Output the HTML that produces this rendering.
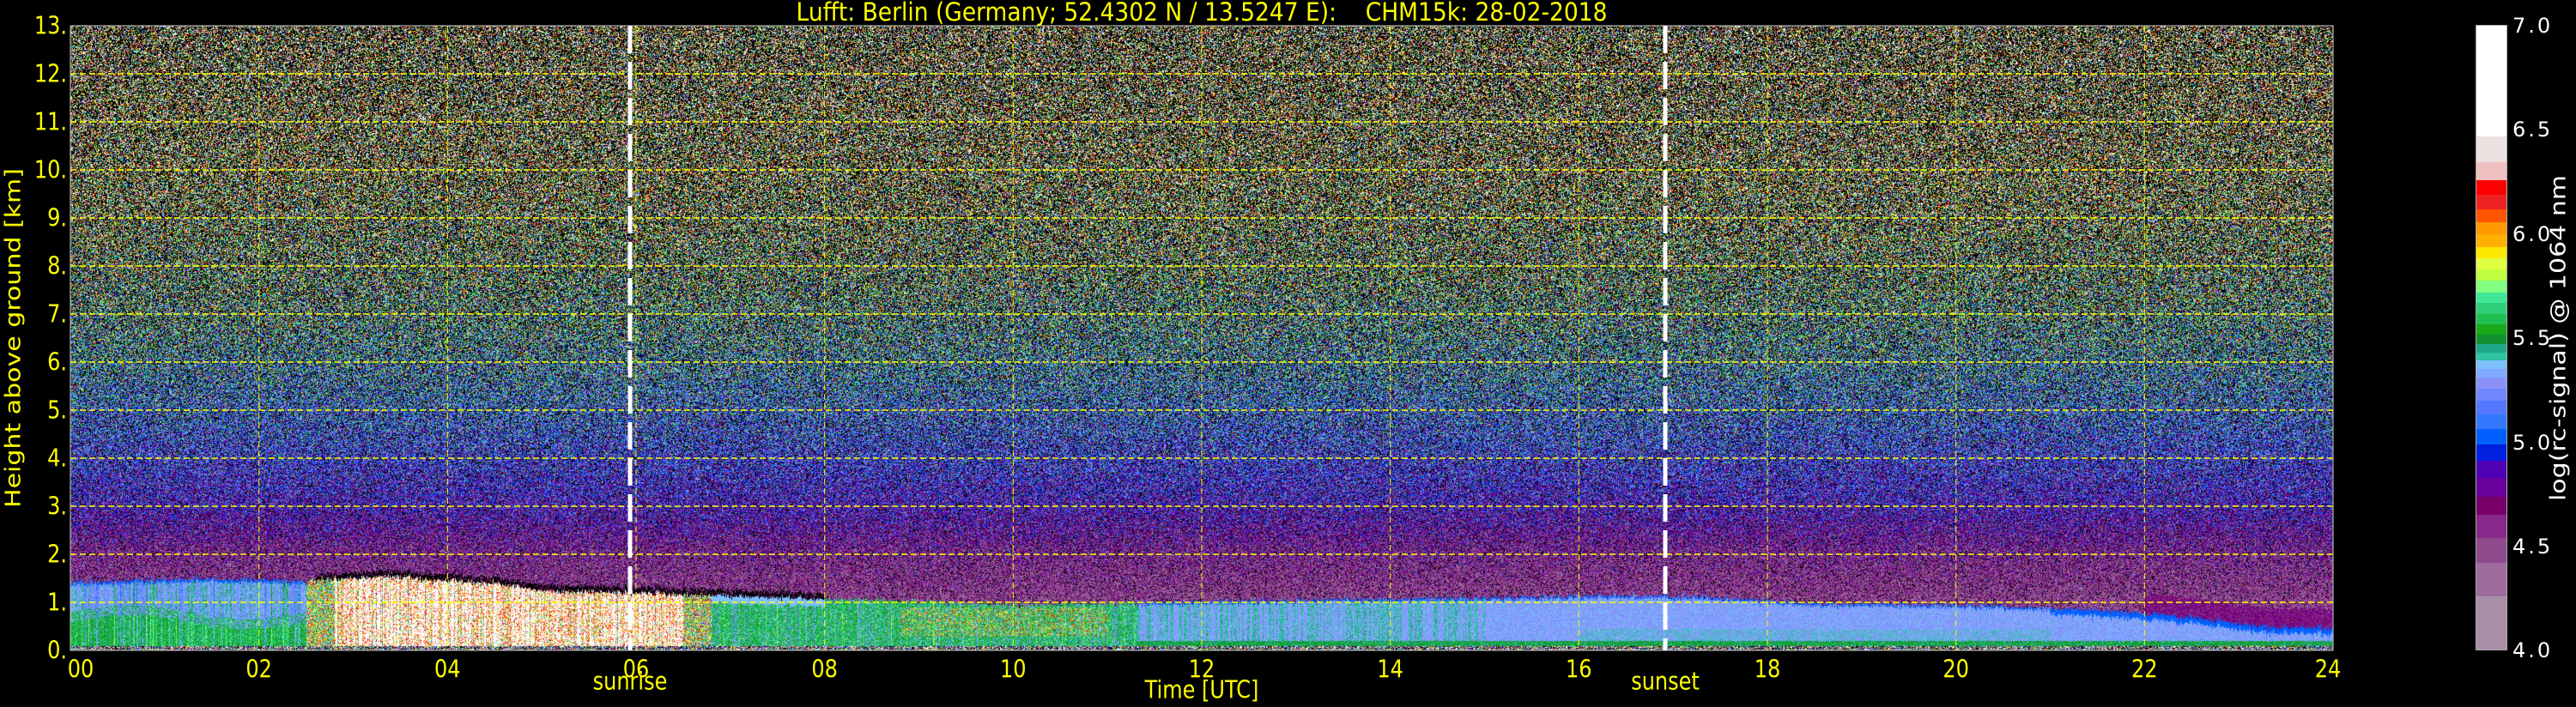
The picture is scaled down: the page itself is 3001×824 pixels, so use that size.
<!DOCTYPE html>
<html><head><meta charset="utf-8">
<style>
html,body{margin:0;padding:0;background:#000;width:3001px;height:824px;overflow:hidden;}
body{position:relative;font-family:"DejaVu Sans","Liberation Sans",sans-serif;}
.t{position:absolute;color:#ffff00;font-size:24px;white-space:pre;line-height:1;}
.yl{right:2923px;text-align:right;transform:scaleY(1.2);transform-origin:right center;}
.xl{transform:translate(-50%,0) scaleY(1.2);}
.cb{position:absolute;left:2927px;color:#fff;font-size:24px;letter-spacing:3px;line-height:1;transform:translateY(-50%);}
#plot{position:absolute;left:82px;top:30px;width:2636px;height:728px;
background:linear-gradient(to bottom,#4a3c30 0%,#3c4438 35%,#2c4a52 55%,#2c3a78 70%,#402c70 80%,#5a2e66 86%,#7b88e0 88%,#60c090 96%,#604040 100%);}
</style></head><body>
<div id="plot"><canvas id="cv" width="2636" height="728" style="display:block"></canvas></div>
<svg width="3001" height="824" style="position:absolute;left:0;top:0">
<g stroke="#ffff00" stroke-width="1.5" stroke-dasharray="7,4" fill="none">
<line x1="82" x2="2718" y1="702" y2="702"/><line x1="82" x2="2718" y1="646" y2="646"/>
<line x1="82" x2="2718" y1="590" y2="590"/><line x1="82" x2="2718" y1="534" y2="534"/>
<line x1="82" x2="2718" y1="478" y2="478"/><line x1="82" x2="2718" y1="422" y2="422"/>
<line x1="82" x2="2718" y1="366" y2="366"/><line x1="82" x2="2718" y1="310" y2="310"/>
<line x1="82" x2="2718" y1="254" y2="254"/><line x1="82" x2="2718" y1="198" y2="198"/>
<line x1="82" x2="2718" y1="142" y2="142"/><line x1="82" x2="2718" y1="86" y2="86"/>
</g>
<g stroke="#ffff00" stroke-width="1" stroke-dasharray="7,4" fill="none">
<line y1="30" y2="758" x1="301.7" x2="301.7"/><line y1="30" y2="758" x1="521.3" x2="521.3"/>
<line y1="30" y2="758" x1="741" x2="741"/><line y1="30" y2="758" x1="960.7" x2="960.7"/>
<line y1="30" y2="758" x1="1180.3" x2="1180.3"/><line y1="30" y2="758" x1="1400" x2="1400"/>
<line y1="30" y2="758" x1="1619.7" x2="1619.7"/><line y1="30" y2="758" x1="1839.3" x2="1839.3"/>
<line y1="30" y2="758" x1="2059" x2="2059"/><line y1="30" y2="758" x1="2278.7" x2="2278.7"/>
<line y1="30" y2="758" x1="2498.3" x2="2498.3"/>
</g>
<rect x="82" y="30" width="2636" height="728" fill="none" stroke="#ccc" stroke-width="1"/>
<g stroke="#fff" stroke-width="5" stroke-dasharray="32,10">
<line x1="734" x2="734" y1="30" y2="758"/><line x1="1940" x2="1940" y1="30" y2="758"/>
</g>
</svg>
<div class="t" style="left:1400px;top:2px;transform:translateX(-50%) scaleY(1.1);font-size:26.5px">Lufft: Berlin (Germany; 52.4302 N / 13.5247 E):    CHM15k: 28-02-2018</div>
<div class="t yl" style="top:18px">13.</div>
<div class="t yl" style="top:74px">12.</div>
<div class="t yl" style="top:130px">11.</div>
<div class="t yl" style="top:186px">10.</div>
<div class="t yl" style="top:242px">9.</div>
<div class="t yl" style="top:298px">8.</div>
<div class="t yl" style="top:354px">7.</div>
<div class="t yl" style="top:410px">6.</div>
<div class="t yl" style="top:466px">5.</div>
<div class="t yl" style="top:522px">4.</div>
<div class="t yl" style="top:578px">3.</div>
<div class="t yl" style="top:634px">2.</div>
<div class="t yl" style="top:690px">1.</div>
<div class="t yl" style="top:746px">0.</div>
<div class="t" style="left:15px;top:394px;transform:translate(-50%,-50%) rotate(-90deg) scaleX(1.2);font-size:25px">Height above ground [km]</div>
<div class="t xl" style="left:94px;top:768px">00</div>
<div class="t xl" style="left:301.7px;top:768px">02</div>
<div class="t xl" style="left:521.3px;top:768px">04</div>
<div class="t xl" style="left:741px;top:768px">06</div>
<div class="t xl" style="left:960.7px;top:768px">08</div>
<div class="t xl" style="left:1180.3px;top:768px">10</div>
<div class="t xl" style="left:1400px;top:768px">12</div>
<div class="t xl" style="left:1619.7px;top:768px">14</div>
<div class="t xl" style="left:1839.3px;top:768px">16</div>
<div class="t xl" style="left:2059px;top:768px">18</div>
<div class="t xl" style="left:2278.7px;top:768px">20</div>
<div class="t xl" style="left:2498.3px;top:768px">22</div>
<div class="t xl" style="left:2712px;top:768px">24</div>
<div class="t xl" style="left:734px;top:782px">sunrise</div>
<div class="t xl" style="left:1940px;top:782px">sunset</div>
<div class="t xl" style="left:1400px;top:792px">Time [UTC]</div>
<div id="cbar" style="position:absolute;left:2884px;top:29px;width:37px;height:729px;border:1px solid #aaa;box-sizing:border-box;overflow:hidden"></div>
<div class="cb" style="top:30px">7.0</div>
<div class="cb" style="top:151px">6.5</div>
<div class="cb" style="top:273px">6.0</div>
<div class="cb" style="top:394px">5.5</div>
<div class="cb" style="top:516px">5.0</div>
<div class="cb" style="top:637px">4.5</div>
<div class="cb" style="top:758px">4.0</div>
<div style="position:absolute;left:2980px;top:394px;color:#fff;font-size:25px;white-space:pre;transform:translate(-50%,-50%) rotate(-90deg) scaleX(1.2);line-height:1">log(rc-signal) @ 1064 nm</div>
<script>
(function(){
var ys=[1443,1320,1245,1190,1140,1100,1058,1020,983,950,917,887,860,835,815,797,780,760,740,717,695,670,647,620,595,570,545,517,490,462,430,398,357,300,56];
var cols=["#a98ea8","#a06b9e","#8f4a8e","#88288a","#780068","#6a009c","#4d00b4","#0020e0","#0060ff","#3377ff","#5577ff","#6f88ff","#8a92f8","#80aaff","#7fc0ff","#2ec4a4","#1fa88a","#139030","#18a818","#20c050","#30d078","#3ee898","#80ff80","#c0ff40","#e0ff40","#ffe800","#ffb000","#ff9900","#ff5500","#ee2222","#ff0000","#f0c0c0","#ece0e0","#ffffff"];
var bnd=ys.map(function(y){return 4+(1443-y)/462.33;});
var cb=document.getElementById('cbar');var h='';
for(var i=0;i<cols.length;i++){var top=(7-bnd[i+1])*243;var bot=(7-bnd[i])*243;h+='<div style="position:absolute;left:0;right:0;top:'+top.toFixed(1)+'px;height:'+(bot-top+0.6).toFixed(1)+'px;background:'+cols[i]+'"></div>';}
cb.innerHTML=h;
var rgb=cols.map(function(c){return [parseInt(c.substr(1,2),16),parseInt(c.substr(3,2),16),parseInt(c.substr(5,2),16)];});
var LUT=[];for(var k=0;k<=300;k++){var v=4+k*0.01;var j=0;while(j<cols.length-1&&v>=bnd[j+1])j++;LUT.push(rgb[j]);}
var sx=2463534242>>>0;function r(){sx^=sx<<13;sx>>>=0;sx^=sx>>>17;sx^=sx<<5;sx>>>=0;return sx/4294967296;}
function N(){var u=r()||1e-9,w=r();return Math.sqrt(-2*Math.log(u))*Math.cos(6.283185*w);}
function interp(p,x){if(x<=p[0][0])return p[0][1];for(var i=1;i<p.length;i++){if(x<=p[i][0]){var a=p[i-1],b=p[i];return a[1]+(b[1]-a[1])*(x-a[0])/(b[0]-a[0]);}}return p[p.length-1][1];}
var TOP=[[0,1.42],[1.5,1.5],[2.4,1.45],[3.3,1.55],[4.5,1.4],[5,1.25],[6.8,1.15],[7.5,1.1],[8.5,1.05],[10,0.95],[11.5,1.0],[13,1.05],[15,1.1],[16.5,1.15],[17.5,1.1],[18.5,0.98],[20,0.95],[21.5,0.85],[22.5,0.7],[23.2,0.5],[24,0.46]];
var MU=[[1,4.5],[2,4.6],[3,4.85],[4.5,5.1],[6,5.35],[8,5.65],[10,5.9],[13,6.0]];
var SG=[[1,0.15],[3,0.25],[5,0.35],[8,0.5],[13,0.6]];
var PB=[[1,0.12],[4,0.2],[8,0.38],[13,0.5]];
var W=2636,H=728;var cv=document.getElementById('cv');var ctx=cv.getContext('2d');
var img=ctx.createImageData(W,H);var d=img.data;
var muR=[],sgR=[],pbR=[];
for(var y=0;y<H;y++){var hk=(H-y)/56;muR.push(interp(MU,hk));sgR.push(interp(SG,hk));pbR.push(interp(PB,hk));}
for(var x=0;x<W;x++){
 var t=x/W*24;var tp=interp(TOP,t)+0.03*N();var streak=(r()<0.5)?1:0;var colj=N()*0.08;
 for(var y=0;y<H;y++){
  var hk=(H-y)/56;var v;
  if(hk<0.09){v=5.5+0.9*N(); if(r()<0.2)v=3;}
  else if(hk<tp){
   if(t<2.5){var lim=0.6+0.15*Math.sin(t*2.5);v=(hk<lim?5.55:(hk<lim+0.2?(r()<0.5?5.55:5.33):5.33))+0.06*N()+colj; if(tp-hk<0.05)v=5.05;}
   else if(t<6.8){v=6.45+0.4*N()+colj*3; if(t<2.8||t>6.5)v=5.8+0.4*N();}
   else if(t<11.3){v=5.52+0.1*N()+colj; if(t>8.8&&t<11&&hk>0.3&&hk<0.9&&r()<0.35)v=5.95+0.25*N(); if(t<8&&tp-hk<0.15)v=5.36;}
   else{ if(hk<0.2)v=5.5+0.05*N(); else {v=5.32+0.04*N(); if(t<15&&streak&&r()<0.8)v=5.43+0.03*N(); if(t>16&&t<21&&hk<0.45&&r()<0.3)v=5.43;}
     if(t>21&&tp-hk<0.12)v=5.02; if(tp-hk<0.04)v=5.05;}
  } else {
   if(t>22&&hk<tp+0.4){v=4.68+0.08*N();}
   else if(t>2.6&&t<8&&hk<tp+0.12){v=(r()<0.8)?3:4.6;}
   else{ if(r()<pbR[y])v=3; else v=muR[y]+sgR[y]*N(); }
  }
  var o=(y*W+x)*4;
  if(v<4){d[o]=0;d[o+1]=0;d[o+2]=0;}
  else{if(v>7)v=7;var c=LUT[((v-4)*100)|0];d[o]=c[0];d[o+1]=c[1];d[o+2]=c[2];}
  d[o+3]=255;
 }
}
ctx.putImageData(img,0,0);
})();
</script>
</body></html>
